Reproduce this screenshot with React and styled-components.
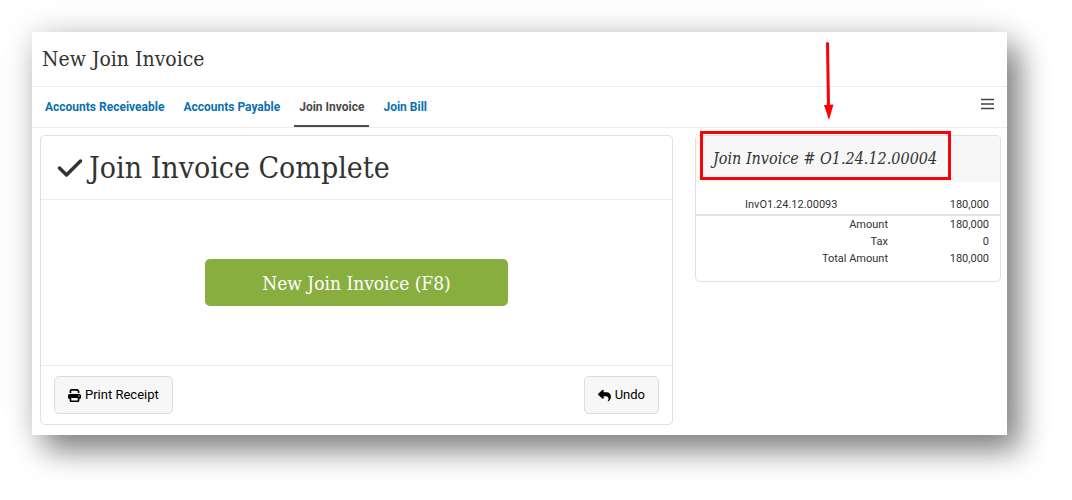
import styled, { createGlobalStyle } from "styled-components";
import { useState } from 'react';
import { FaCheck, FaPrint, FaReply } from 'react-icons/fa6';

const slab = `"Roboto Slab", "DejaVu Serif Condensed", "DejaVu Serif", serif`;
const sans = `Roboto, "Liberation Sans", sans-serif`;
const line = '#ebebeb';

const GlobalStyle = createGlobalStyle`
    * {
        box-sizing: border-box;
    }
    body {
        margin: 0;
        background: #fff;
        color: #333;
        font-family: ${sans};
    }
`
const Page = styled.div`
    padding: 32px 65px 65px 32px;
`
const Panel = styled.div`
    background: #fff;
    box-shadow: 13px 16px 28px rgba(0, 0, 0, 0.45), 0 0 32px rgba(0, 0, 0, 0.14);
`
const TitleBar = styled.header`
    height: 55px;
    padding: 0 10px;
    display: flex;
    align-items: center;
    border-bottom: 1px solid ${line};
`
const Title = styled.h1`
    margin: 0;
    font: 400 21px/28px ${slab};
`
const Toolbar = styled.div`
    height: 41px;
    padding: 0 13px 0 8px;
    display: flex;
    justify-content: space-between;
    border-bottom: 1px solid ${line};
`
const Tabs = styled.nav`
    display: flex;
    gap: 9px;
`
const Tab = styled.a`
    height: 40px;
    padding: 0 5px;
    font-size: 12px;
    font-weight: 700;
    line-height: 40px;
    text-decoration: none;
    color: ${(props) => props.$active ? '#4a4a4a' : '#0a70b0'};
    box-shadow: ${(props) => props.$active ? 'inset 0 -2px #4a4a4a' : 'none'};
`
const MenuButton = styled.button`
    padding: 0 0 6px;
    border: 0;
    background: none;
    display: flex;
    align-items: center;
    color: #444;
`
const Content = styled.main`
    padding: 7px 6px 10px 8px;
    display: grid;
    grid-template-columns: 633fr 306fr;
    gap: 22px;
    align-items: start;
`
const Card = styled.section`
    border: 1px solid #e0e0e0;
    border-radius: 5px;
`
const CardHead = styled.div`
    height: 64px;
    padding: 0 15px;
    display: flex;
    align-items: center;
    gap: 5px;
    border-bottom: 1px solid ${line};
    font-size: 28px;
`
const CardTitle = styled.h2`
    margin: 0;
    font: 400 30px/36px ${slab};
`
const CardBody = styled.div`
    height: 165px;
    padding: 0 164px;
    display: flex;
    align-items: center;
`
const NewButton = styled.button`
    width: 100%;
    height: 47px;
    border: 0;
    border-radius: 5px;
    background: #89ae40;
    color: #fff;
    font: 400 19px/24px ${slab};
`
const CardFoot = styled.div`
    padding: 10px 13px;
    display: flex;
    justify-content: space-between;
    border-top: 1px solid ${line};
`
const FootButton = styled.button`
    height: 38px;
    padding: 0 13px;
    display: flex;
    align-items: center;
    gap: 4px;
    border: 1px solid #ddd;
    border-radius: 5px;
    background: #f7f7f7;
    color: #000;
    font: 400 13px/20px ${sans};
`
const InvoiceHead = styled.div`
    position: relative;
    height: 46px;
    padding: 0 17px;
    display: flex;
    align-items: center;
    border-radius: 4px 4px 0 0;
    background: #f7f7f7;
`
const InvoiceTitle = styled.h3`
    margin: 0;
    font: italic 400 16px/24px ${slab};
`
// red marker drawn over the invoice number
const Highlight = styled.div`
    position: absolute;
    left: 4px;
    top: -5px;
    width: 251px;
    height: 49px;
    border: 3px solid #fb0007;
`
const Arrow = styled.svg`
    position: absolute;
    left: 127px;
    top: -94px;
    width: 12px;
    height: 78px;
`
const Table = styled.table`
    width: 100%;
    margin: 13px 0 14px;
    border-collapse: collapse;
    table-layout: fixed;
    font-size: 11px;
    line-height: 16px;
`
const Cell = styled.td`
    padding: 0 11px 0 0;
    text-align: right;
`
const Label = styled.th`
    padding: ${(props) => props.$item ? '0 0 0 49px' : '0'};
    font-weight: 400;
    text-align: ${(props) => props.$item ? 'left' : 'right'};
`
const ItemRow = styled.tr`
    height: 20px;
    border-bottom: 2px solid #e4e4e4;
`
const TotalRow = styled.tr`
    height: 17px;

    & > * {
        padding-top: 1px;
    }
`
const AmountCol = styled.col`
    width: 112px;
`

const tabs = ['Accounts Receiveable', 'Accounts Payable', 'Join Invoice', 'Join Bill'];

const totals = [
    { label: 'Amount', value: '180,000' },
    { label: 'Tax', value: '0' },
    { label: 'Total Amount', value: '180,000' },
];


const InvoiceSummary = () => {
    return (
        <Card>
            <InvoiceHead>
                <InvoiceTitle>Join Invoice # O1.24.12.00004</InvoiceTitle>
                <Highlight />
                <Arrow viewBox="0 0 12 78" aria-hidden="true">
                    <path d="M4.5 1.5 L5.5 64" stroke="#fb0007" strokeWidth="3" strokeLinecap="round" />
                    <path d="M1 63 L10.5 62.5 L6 78 Z" fill="#fb0007" />
                </Arrow>
            </InvoiceHead>
            <Table>
                <colgroup>
                    <col />
                    <AmountCol />
                </colgroup>
                <tbody>
                    <ItemRow>
                        <Label scope="row" $item>InvO1.24.12.00093</Label>
                        <Cell>180,000</Cell>
                    </ItemRow>
                    {totals.map((item) => (
                        <TotalRow key={item.label}>
                            <Label scope="row">{item.label}</Label>
                            <Cell>{item.value}</Cell>
                        </TotalRow>
                    ))}
                </tbody>
            </Table>
        </Card>
    )
}


export default function App() {
    const [active, setActive] = useState('Join Invoice');

    return (
        <Page>
            <GlobalStyle />
            <Panel>
                <TitleBar>
                    <Title>New Join Invoice</Title>
                </TitleBar>

                <Toolbar>
                    <Tabs>
                        {tabs.map((tab) => (
                            <Tab key={tab} href="#" $active={tab === active} onClick={() => setActive(tab)}>{tab}</Tab>
                        ))}
                    </Tabs>
                    <MenuButton aria-label="Menu">
                        <svg width="13" height="12" viewBox="0 0 13 12">
                            <path d="M0 1.5h13M0 6h13M0 10.5h13" stroke="currentColor" strokeWidth="1.6" />
                        </svg>
                    </MenuButton>
                </Toolbar>

                <Content>
                    <Card>
                        <CardHead>
                            <FaCheck />
                            <CardTitle>Join Invoice Complete</CardTitle>
                        </CardHead>
                        <CardBody>
                            <NewButton>New Join Invoice (F8)</NewButton>
                        </CardBody>
                        <CardFoot>
                            <FootButton><FaPrint />Print Receipt</FootButton>
                            <FootButton><FaReply />Undo</FootButton>
                        </CardFoot>
                    </Card>
                    <InvoiceSummary />
                </Content>
            </Panel>
        </Page>
    )
}
